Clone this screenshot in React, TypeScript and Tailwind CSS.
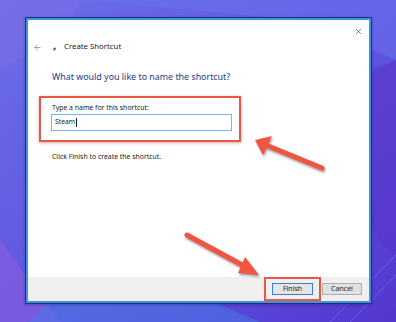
import { X, ArrowLeft } from 'lucide-react';

export default function App() {
    return (
        <div className="relative h-[322px] w-[396px] overflow-hidden bg-gradient-to-br from-[#6d6ee8] via-[#5f57e0] to-[#5436cf] font-['Noto_Sans','Liberation_Sans',sans-serif]">
            {/* desktop wallpaper shapes */}
            <svg className="absolute inset-0" width="396" height="322" viewBox="0 0 396 322">
                <polygon points="0,0 82,0 55,40 0,70" fill="#7b6fe6" opacity="0.55" />
                <polygon points="82,0 396,0 396,60 300,20" fill="#6b74f0" opacity="0.5" />
                <polygon points="0,240 60,322 0,322" fill="#8a5ee0" opacity="0.6" />
                <polygon points="30,322 90,250 260,322" fill="#4a7ae8" opacity="0.55" />
                <polygon points="372,70 396,60 396,260 372,230" fill="#5a33cc" opacity="0.6" />
                <line x1="330" y1="322" x2="396" y2="255" stroke="#7d7bf0" strokeWidth="1" opacity="0.6" />
                <line x1="350" y1="322" x2="396" y2="275" stroke="#7d7bf0" strokeWidth="1" opacity="0.5" />
            </svg>

            <div className="relative pl-[25px] pt-[17px]">
                {/* Window */}
                <div className="h-[287px] w-[347px] border border-[#1d2f7d] bg-[#3f93dd] p-[2px] shadow-[0_1px_3px_rgba(20,20,80,0.3)]">
                    <div className="flex h-full flex-col bg-white">
                        {/* Title bar */}
                        <div className="flex h-[18px] items-end justify-end pr-[6px]">
                            <X size={9} strokeWidth={1.6} className="mb-[2px] text-[#333]" />
                        </div>

                        {/* Nav row */}
                        <div className="flex h-[18px] items-center pl-[5px] text-[7.8px] text-[#222]">
                            <ArrowLeft size={9} strokeWidth={1.4} className="text-[#555]" />
                            <span className="ml-[11px] mt-[3px] h-[2px] w-[3px] rotate-[-35deg] bg-[#666]" />
                            <span className="ml-[8px]">Create Shortcut</span>
                        </div>

                        {/* Heading */}
                        <h1 className="ml-[24px] mt-[14px] text-[8.9px] leading-[14px] text-[#1f3a8c]">
                            What would you like to name the shortcut?
                        </h1>

                        {/* Annotated name field */}
                        <div className="ml-[11px] mt-[12px] w-[202px] border-2 border-[#ea5643] pb-[9px] pl-[11px] pr-[7px] pt-[5px] shadow-[0_1px_3px_rgba(120,30,20,0.35)]">
                            <label className="block text-[6.9px] leading-[10px] text-[#222]">
                                Type a name for this shortcut:
                            </label>
                            <div className="ml-[-1px] mt-[1px] flex h-[17px] w-[181px] items-center border border-[#7eb4ea] pl-[3px] text-[6.8px] text-[#222]">
                                Steam<span className="ml-[1px] h-[9px] w-px bg-[#222]" />
                            </div>
                        </div>

                        <p className="ml-[24px] mt-[10px] text-[6.9px] leading-[10px] text-[#222]">
                            Click Finish to create the shortcut.
                        </p>

                        <div className="flex-1" />

                        {/* Button bar */}
                        <div className="flex h-[24px] items-center justify-end bg-[#f0f0f0] pr-[7px]">
                            <div className="border-2 border-[#ea5643] px-[6px] py-[4px]">
                                <button className="flex h-[12px] w-[41px] items-center justify-center border border-[#3c7fd0] bg-[#e5e5e5] text-[7px] text-[#222]">
                                    Finish
                                </button>
                            </div>
                            <button className="ml-[1px] flex h-[12px] w-[40px] items-center justify-center border border-[#adadad] bg-[#e1e1e1] text-[7px] text-[#222]">
                                Cancel
                            </button>
                        </div>
                    </div>
                </div>
            </div>

            {/* Annotation arrows */}
            <svg className="absolute inset-0 drop-shadow-[1px_2px_1px_rgba(60,20,40,0.45)]" width="396" height="322" viewBox="0 0 396 322">
                <line x1="322" y1="168" x2="266" y2="145" stroke="#f0553f" strokeWidth="5" strokeLinecap="round" />
                <polygon points="255,140 272,136 263,155" fill="#f0553f" />
                <line x1="187" y1="235" x2="246" y2="267" stroke="#f0553f" strokeWidth="5" strokeLinecap="round" />
                <polygon points="259,275 245,257 238,273" fill="#f0553f" />
            </svg>
        </div>
    );
}
